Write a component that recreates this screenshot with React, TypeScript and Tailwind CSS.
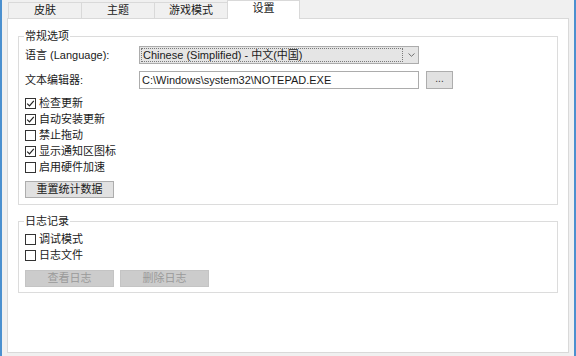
import React from "react";

const FONT = { fontFamily: '"Liberation Sans", "Noto Sans CJK SC", sans-serif' };

function Check({ checked, label }: { checked?: boolean; label: string }) {
  return (
    <div className="flex h-[16px] items-center gap-[3px]">
      <div className="flex h-[11px] w-[11px] items-center justify-center border border-[#333333] bg-white">
        {checked && (
          <svg width="9" height="9" viewBox="0 0 9 9">
            <path d="M1.2 4.6 L3.5 6.9 L7.8 1.8" fill="none" stroke="#222" strokeWidth="1.2" />
          </svg>
        )}
      </div>
      <span className="text-[11px] leading-none text-[#1a1a1a]">{label}</span>
    </div>
  );
}

function Btn({ label, disabled, className = "" }: { label: string; disabled?: boolean; className?: string }) {
  return (
    <div
      className={
        "flex h-[17px] w-[89px] items-center justify-center border text-[11px] leading-none " +
        (disabled
          ? "border-[#c4c4c4] bg-[#cccccc] text-[#9a9a9a]"
          : "border-[#adadad] bg-[#e1e1e1] text-[#1a1a1a]") +
        " " +
        className
      }
    >
      {label}
    </div>
  );
}

function Group({ title, children, className = "" }: { title: string; children: React.ReactNode; className?: string }) {
  return (
    <div className={"relative border border-[#dcdcdc] " + className}>
      <span className="absolute left-[5px] top-[-8px] bg-white px-[1px] text-[11px] leading-[14px] text-[#1a1a1a]">
        {title}
      </span>
      {children}
    </div>
  );
}

export default function App() {
  const tabs = ["皮肤", "主题", "游戏模式"];
  return (
    <div
      className="flex h-[356px] w-[576px] flex-col overflow-hidden border-l-2 border-r-2 border-[#4b90cf] bg-[#f0f0f0]"
      style={FONT}
    >
      <div className="flex flex-1 flex-col pl-[5px] pr-[5px] pb-[3px]">
        {/* tab strip */}
        <div className="flex h-[18px] items-end pl-[1px]">
          {tabs.map((t) => (
            <div
              key={t}
              className="flex h-[16px] w-[73px] items-center justify-center border-t border-l border-[#d9d9d9] bg-[#f0f0f0] text-[11px] leading-none text-[#1a1a1a]"
            >
              {t}
            </div>
          ))}
          <div className="z-10 -mb-px flex h-[19px] w-[73px] items-center justify-center border-l border-r border-t border-[#d9d9d9] bg-white pb-[3px] text-[11px] leading-none text-[#1a1a1a]">
            设置
          </div>
        </div>
        {/* tab page */}
        <div className="flex flex-1 flex-col border border-[#d9d9d9] bg-white px-[10px] pt-[17px]">
          <Group title="常规选项">
            <div className="flex flex-col pl-[6px] pt-[9px] pb-[6px]">
              <div className="flex h-[18px] items-center">
                <span className="w-[114px] text-[11px] leading-none text-[#1a1a1a]">语言 (Language):</span>
                <div className="flex h-[18px] w-[280px] border border-[#acacac] bg-[#e5e5e5]">
                  <div className="m-[1px] flex flex-1 items-center border border-dotted border-[#7a7a7a] pl-[1px] text-[11px] leading-none text-[#1a1a1a]">
                    Chinese (Simplified) - 中文(中国)
                  </div>
                  <div className="flex w-[14px] items-center justify-center">
                    <svg width="7" height="4" viewBox="0 0 7 4">
                      <path d="M0.5 0.5 L3.5 3.3 L6.5 0.5" fill="none" stroke="#707070" strokeWidth="1" />
                    </svg>
                  </div>
                </div>
              </div>
              <div className="mt-[7px] flex h-[18px] items-center">
                <span className="w-[114px] text-[11px] leading-none text-[#1a1a1a]">文本编辑器:</span>
                <div className="flex h-[18px] w-[280px] items-center border border-[#acacac] bg-white pl-[2px] text-[11px] leading-none text-[#1a1a1a]">
                  C:\Windows\system32\NOTEPAD.EXE
                </div>
                <div className="ml-[7px] flex h-[18px] w-[27px] items-center justify-center border border-[#adadad] bg-[#e1e1e1] pb-[3px] text-[10px] leading-none text-[#333]">
                  ...
                </div>
              </div>
              <div className="mt-[6px] flex flex-col">
                <Check checked label="检查更新" />
                <Check checked label="自动安装更新" />
                <Check label="禁止拖动" />
                <Check checked label="显示通知区图标" />
                <Check label="启用硬件加速" />
              </div>
              <Btn label="重置统计数据" className="mt-[6px]" />
            </div>
          </Group>
          <Group title="日志记录" className="mt-[16px]">
            <div className="flex flex-col pl-[6px] pt-[9px] pb-[5px]">
              <Check label="调试模式" />
              <Check label="日志文件" />
              <div className="mt-[7px] flex gap-[6px]">
                <Btn label="查看日志" disabled />
                <Btn label="删除日志" disabled />
              </div>
            </div>
          </Group>
        </div>
      </div>
    </div>
  );
}
